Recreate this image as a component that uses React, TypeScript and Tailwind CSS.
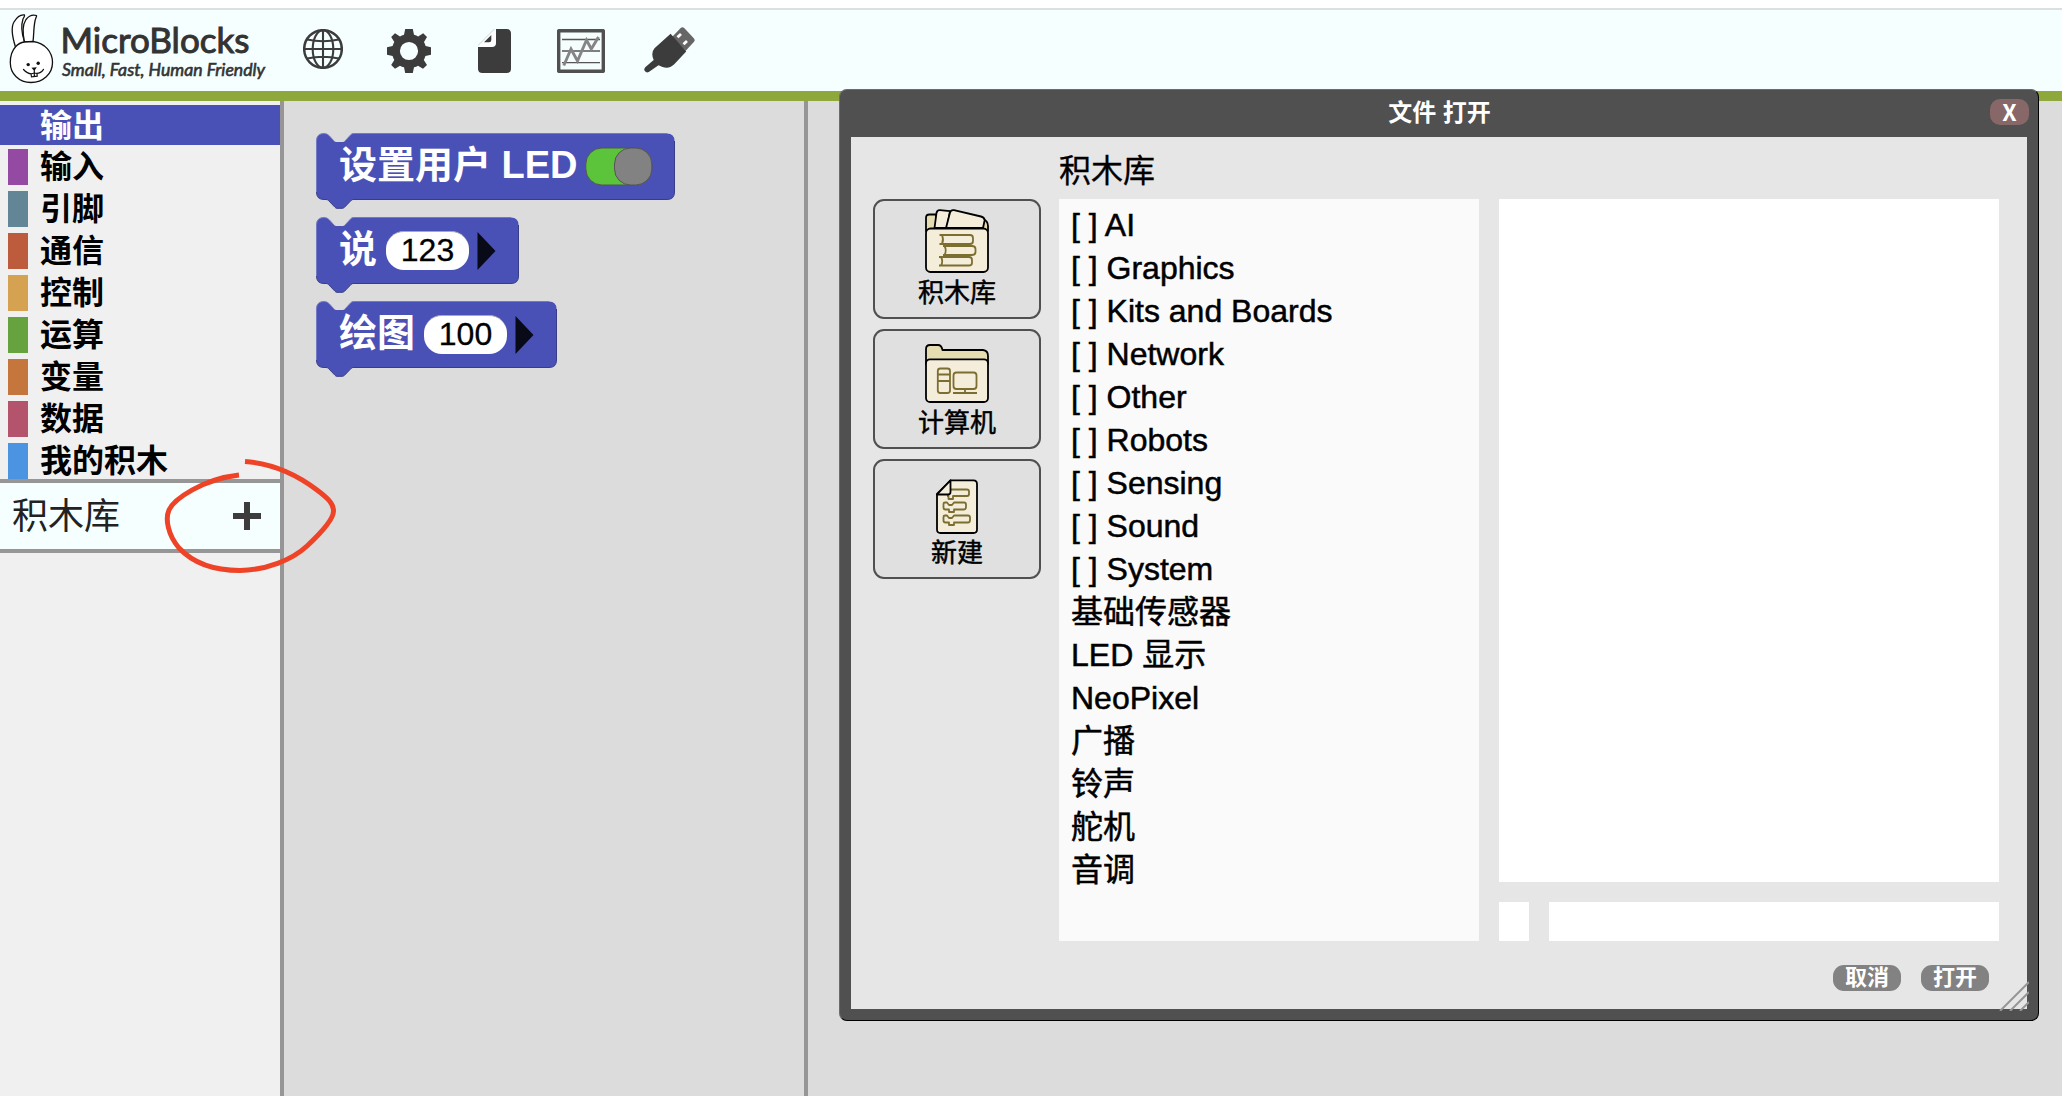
import React from "react";

const INK = "#3c3c3c";

const categories = [
  { name: "输入", swatch: "bg-[#9449a2]" },
  { name: "引脚", swatch: "bg-[#638697]" },
  { name: "通信", swatch: "bg-[#bd5b3d]" },
  { name: "控制", swatch: "bg-[#d5a252]" },
  { name: "运算", swatch: "bg-[#66a33f]" },
  { name: "变量", swatch: "bg-[#c5763c]" },
  { name: "数据", swatch: "bg-[#b4546c]" },
  { name: "我的积木", swatch: "bg-[#4a94e2]" },
];

const entries = [
  "[ ] AI",
  "[ ] Graphics",
  "[ ] Kits and Boards",
  "[ ] Network",
  "[ ] Other",
  "[ ] Robots",
  "[ ] Sensing",
  "[ ] Sound",
  "[ ] System",
  "基础传感器",
  "LED 显示",
  "NeoPixel",
  "广播",
  "铃声",
  "舵机",
  "音调",
];

function Logo() {
  return (
    <svg width="280" height="81" viewBox="0 10 280 81" className="shrink-0">
      <g fill="#fff" stroke="#111" strokeWidth="1.3" strokeLinejoin="round">
        <path d="M15.5 47 C12 36 11 27 14 22 C17 17 21 14.5 24.5 15 C25 16 24 17 23 19 C21 25 21.5 33 24.5 42 Z" />
        <path d="M24.5 42 C22.5 33 23 24 26 19.5 C29 15.5 33 14.5 36.5 15.5 C37 16.5 35.5 18 35 21 C33.5 28 34 34 33 41.5 Z" />
        <path d="M15.8 46.5 C18 44 21 42.5 24.5 42 L33 41.5 C45 43 52.5 52 52.5 62.5 C52.5 74 43 82.5 31 82.5 C19 82.5 10.3 74 10.3 62.5 C10.3 56 12.5 50 15.8 46.5 Z" />
      </g>
      <circle cx="28.2" cy="64.6" r="1.7" fill="#111" />
      <circle cx="38.2" cy="63.2" r="1.7" fill="#111" />
      <path d="M31.5 67.8 L36.8 67.3 L34.3 71 Z" fill="#111" />
      <g fill="none" stroke="#111" strokeWidth="1.2" strokeLinecap="round">
        <path d="M23.5 69.5 Q29 75.5 34.3 73 Q40 74.5 43.5 69.3" />
        <path d="M34.3 70.5 V76 M31 74 L31.5 76.8 L37.2 76.2 L37 73.5" />
      </g>
      <text
        x="60.5"
        y="52.6"
        textLength="189"
        lengthAdjust="spacingAndGlyphs"
        fill="#333"
        stroke="#333"
        strokeWidth="1"
        className="font-['Lato','Liberation_Sans',sans-serif] text-[35px] font-normal"
      >
        MicroBlocks
      </text>
      <text
        x="62"
        y="76"
        textLength="203"
        lengthAdjust="spacingAndGlyphs"
        fill="#333"
        stroke="#333"
        strokeWidth="0.6"
        className="font-['Lato','Liberation_Sans',sans-serif] text-[17.5px] font-normal italic"
      >
        Small, Fast, Human Friendly
      </text>
    </svg>
  );
}

function Globe() {
  return (
    <svg width="40" height="40" viewBox="0 0 40 40" fill="none" stroke={INK} strokeWidth="2.1">
      <circle cx="20" cy="20" r="18.8" strokeWidth="2.5" />
      <ellipse cx="20" cy="20" rx="10.3" ry="18.9" />
      <path d="M20 1 V39 M1 20 H39 M4 10.5 Q20 14 36 10.5 M4 29.5 Q20 26 36 29.5" />
    </svg>
  );
}

function Gear() {
  return (
    <svg width="44" height="44" viewBox="0 0 44 44" fill={INK}>
      <path
        fillRule="evenodd"
        d="M18.2 0 H25.8 L27 5.7 Q29.5 6.3 31.2 7.4 L36.2 4.3 L40 8 L37 13 Q38 15 38.6 17 L44 18.3 V25.8 L38.4 27 Q37.8 29.2 36.8 31 L40 36 L36 39.8 L31 36.7 Q29.3 37.8 27 38.3 L25.8 44 H18.2 L17 38.3 Q14.7 37.8 13 36.7 L8 39.8 L4.2 36 L7.3 31 Q6.2 29.2 5.6 27 L0 25.8 V18.3 L5.6 17 Q6.2 15 7.3 13 L4.2 8 L8 4.3 L13 7.4 Q14.7 6.3 17 5.7 Z M22 12.9 A9.1 9.1 0 1 0 22 31.1 A9.1 9.1 0 1 0 22 12.9 Z"
      />
    </svg>
  );
}

function FilePage() {
  return (
    <svg width="33" height="44" viewBox="0 0 33 44">
      <path d="M16.5 0 H28.5 Q33 0 33 4.5 V39.5 Q33 44 28.5 44 H4.5 Q0 44 0 39.5 V16.5 Z" fill={INK} />
      <path d="M16.5 0 H18 V14 Q18 18 14 18 H0 V16.5 Z" fill="#fff" />
      <path d="M13.3 6 V11 Q13.3 13.2 11 13.2 H6 Z" fill={INK} />
    </svg>
  );
}

function Chart() {
  return (
    <svg width="48" height="44" viewBox="0 0 48 44">
      <rect x="1.6" y="1.6" width="44.8" height="40.8" rx="1.2" fill="#f5fdfd" stroke="#505050" strokeWidth="3.6" />
      <path d="M5 10.5 H43 M5 22 H43 M5 33.7 H43" stroke="#555" strokeWidth="1.3" />
      <path d="M6.8 36.5 L14 20 L20.5 32 L29.5 11 L34.3 20 L41.5 8" fill="none" stroke="#858585" strokeWidth="2.9" />
    </svg>
  );
}

function Usb() {
  return (
    <svg width="51" height="46" viewBox="0 0 51 46">
      <path d="M28 10 L36.5 1.2 Q38.3 -0.5 40.2 1 L50 11.6 Q51.3 13.2 49.8 15 L41.5 24 Z" fill="#666" />
      <path d="M33.5 10.3 L37 7 M39.5 17.3 L43 14" stroke="#fff" strokeWidth="2.8" />
      <path
        d="M26.6 6.8 L42.2 24.6 L30.5 37 Q25.500 42.300 18.500 40 L14.500 38.300 L4.800 45 Q1.800 46.300 0.500 43.600 Q-0.300 41.600 1.500 40 L9.700 33 Q6.500 26 10.500 21.300 Z"
        fill={INK}
      />
    </svg>
  );
}

function BlockShape({ width }: { width: number }) {
  const w = width;
  const d = `M0.5 8 Q0.5 0.5 8 0.5 Q11 0.5 13 2.5 L18 8 Q19 9 20.5 9 H26.5 Q28 9 29 8 L35 1.5 Q36 0.5 37.5 0.5 H${w - 8} Q${w - 0.5} 0.5 ${w - 0.5} 8 V59 Q${w - 0.5} 66.5 ${w - 8} 66.5 H37 Q36 66.5 35 67.5 L28.5 74.3 Q27.5 75.3 26 75.3 H21 Q19.8 75.3 19 74.3 L12.5 67.5 Q11.5 66.5 10 66.5 H8 Q0.5 66.5 0.5 59 Z`;
  return (
    <svg width={w} height="76" viewBox={`0 0 ${w} 76`} className="absolute left-0 top-0">
      <path d={d} fill="#4a51b6" />
      <path d={`M0.5 59 V8 Q0.5 0.5 8 0.5 Q11 0.5 13 2.5 L18 8 M29 8 L35 1.5 Q36 0.5 37.5 0.5 H${w - 8}`} fill="none" stroke="#7479c6" strokeWidth="1" />
      <path
        d={`M${w - 0.5} 8 V59 Q${w - 0.5} 66.5 ${w - 8} 66.5 H37 Q36 66.5 35 67.5 L28.5 74.3 Q27.5 75.3 26 75.3 H21 Q19.8 75.3 19 74.3 L12.5 67.5 Q11.5 66.5 10 66.5 H8 Q0.5 66.5 0.5 59`}
        fill="none"
        stroke="#383d89"
        strokeWidth="1"
      />
    </svg>
  );
}

function ScriptBlock({ width, label, children }: { width: number; label: string; children: React.ReactNode }) {
  return (
    <div className="relative h-[84px]" style={{ width }}>
      <BlockShape width={width} />
      <div className="relative flex h-[67px] items-center pl-[23px]">
        <span className="mr-[9px] whitespace-pre pb-[4px] text-[38px] font-bold leading-[40px] text-white">{label}</span>
        {children}
      </div>
    </div>
  );
}

function NumberSlot({ value }: { value: string }) {
  return (
    <>
      <span className="flex h-[39px] w-[83px] items-center justify-center rounded-[18px] border-t border-[#aaa] bg-white pb-[3px] text-[32px] leading-none text-black [-webkit-text-stroke:0.3px_#000]">
        {value}
      </span>
      <svg width="19" height="38" viewBox="0 0 19 38" className="ml-2">
        <path d="M0.5 0 L18.5 19 L0.5 38 Z" fill="#080a18" />
      </svg>
    </>
  );
}

function LibraryFolder() {
  return (
    <svg width="64" height="64" viewBox="0 0 64 64" stroke="#000" strokeWidth="1.8" strokeLinejoin="round">
      <path d="M1 22 V9 Q1 5.5 4.5 5.5 H11 L12 20 Z M58 10 Q63 12 63 17 V22 H57 Z" fill="#e6dcb2" />
      <path d="M9.500 19 L11.500 4 Q12 1 15 1.200 L25 2.200 L22 19 Z" fill="#f3edda" />
      <path d="M21 19 L25 3.500 Q26 0.500 29 1.200 L56 7.500 Q60 8.500 59.500 12 L58 19 Z" fill="#f3edda" />
      <rect x="1" y="19.5" width="62" height="43.5" rx="4.5" fill="#f3edda" />
      <g fill="none" stroke="#7c6e31" strokeWidth="1.8">
        <path d="M14.5 26 H45 Q48 26 48 29 V32 Q48 35 45 35 H14.5 M17 26 Q19 30.5 17 35" />
        <path d="M18 37 H47 Q50.5 37 50.5 40 V43 Q50.5 46 47 46 H18 M19.5 37 Q22 41.5 19.5 46" />
        <path d="M14 48 H44 Q47 48 47 51 V54 Q47 56.5 44 56.5 H14 M16 48 Q18.5 52.3 16 56.5" />
      </g>
    </svg>
  );
}

function ComputerFolder() {
  return (
    <svg width="64" height="59" viewBox="0 0 64 59" stroke="#000" strokeWidth="1.8" strokeLinejoin="round">
      <path d="M1 20 V5 Q1 1 5 1 H13 Q16.500 1 17.500 6 H58 Q63 6.500 63 12 V20 Z" fill="#e6dcb2" />
      <rect x="1" y="15.3" width="62" height="42.7" rx="4" fill="#f3edda" />
      <g fill="none" stroke="#7c6e31" strokeWidth="1.8">
        <rect x="12.8" y="24.5" width="12.2" height="24.5" rx="2.5" />
        <path d="M13 30.5 H25 M13 37 H25" />
        <rect x="28.5" y="28.5" width="23" height="16.5" rx="3" />
        <path d="M40 45 V48.5 M28 49 H52" />
      </g>
    </svg>
  );
}

function NewFile() {
  return (
    <svg width="42" height="55" viewBox="0 0 42 55" stroke="#000" strokeWidth="1.8" strokeLinejoin="round" className="-mb-px">
      <path d="M14.5 1.3 H37.5 Q41 1.3 41 5 V50.5 Q41 54 37.5 54 H4.5 Q1 54 1 50.5 V15 Z" fill="#f3edda" />
      <g fill="none" stroke="#7c6e31" strokeWidth="1.8">
        <path d="M11 17 H12.5 V20 H17 V17 H31 Q33 17 33 15 V12.5 Q33 10.5 31 10.5 H15" />
        <path d="M9 23.5 H11 L13 26 H16 L18 23.5 H28 Q30 23.5 30 25.5 V28 Q30 30.5 28 30.5 H18 V33 H13 V30.5 H9.5 Q7.5 30.5 7.5 28.5 V25 Q7.5 23.5 9 23.5 Z" />
        <path d="M9 36.5 H11 L13 39 H16 L18 36.5 H32 Q34 36.5 34 38.5 V41 Q34 43.5 32 43.5 H18 V46 H13 V43.5 H9.5 Q7.5 43.5 7.5 41.5 V38 Q7.5 36.5 9 36.5 Z" />
      </g>
      <path d="M14.5 1.3 V13 Q14.5 15.5 12 15.5 H1 Z" fill="#f3edda" />
    </svg>
  );
}

function PlaceButton({ label, children }: { label: string; children: React.ReactNode }) {
  return (
    <button className="flex h-[120px] w-[168px] flex-col items-center justify-end rounded-[11px] border-2 border-[#505050] bg-[#e0e0e0] pb-[8px]">
      {children}
      <span className="mt-[4px] text-[26px] leading-[32px] [-webkit-text-stroke:0.5px_#000]">{label}</span>
    </button>
  );
}

function FileDialog() {
  return (
    <div className="absolute left-[839px] top-[89px] flex h-[932px] w-[1200px] flex-col rounded-[8px] border border-b-black border-l-[#6b6b6b] border-r-black border-t-[#6b6b6b] bg-[#505050] px-[11px] pb-[11px]">
      <div className="relative flex h-[47px] items-center justify-center text-2xl font-bold text-white">
        <span className="-mt-[2px] pl-px">文件 打开</span>
        <button className="absolute right-[-2px] top-[9px] flex h-[26px] w-[39px] items-center justify-center rounded-[10px] bg-[#876767] pb-px font-['Noto_Sans_CJK_SC',sans-serif] text-[23px] leading-none">
          X
        </button>
      </div>
      <div className="relative flex flex-1 flex-col bg-[#e6e6e6] pl-[22px] pr-[28px]">
        <h2 className="h-[62px] pl-[186px] pt-[11px] text-[32px] leading-[46px] [-webkit-text-stroke:0.3px_#000]">积木库</h2>
        <div className="flex h-[742px]">
          <div className="flex w-[186px] flex-col gap-[10px]">
            <PlaceButton label="积木库">
              <LibraryFolder />
            </PlaceButton>
            <PlaceButton label="计算机">
              <ComputerFolder />
            </PlaceButton>
            <PlaceButton label="新建">
              <NewFile />
            </PlaceButton>
          </div>
          <ul className="w-[420px] bg-[#fafafa] pl-[12px] pt-[5px] text-[32px] leading-[43px] [-webkit-text-stroke:0.5px_#000]">
            {entries.map((entry) => (
              <li key={entry} className="h-[43px] whitespace-nowrap">
                {entry}
              </li>
            ))}
          </ul>
          <div className="ml-5 flex flex-1 flex-col gap-5">
            <div className="h-[683px] bg-white" />
            <div className="flex flex-1 gap-5">
              <div className="w-[30px] bg-white" />
              <div className="flex-1 bg-white" />
            </div>
          </div>
        </div>
        <div className="mt-6 flex justify-end gap-5 pr-[10px] text-[22px] font-bold text-white">
          <button className="flex h-[26px] w-[68px] items-center justify-center rounded-[11px] bg-[#828282] leading-none">取消</button>
          <button className="flex h-[26px] w-[68px] items-center justify-center rounded-[11px] bg-[#828282] leading-none">打开</button>
        </div>
        <svg width="30" height="30" viewBox="0 0 30 30" className="absolute -bottom-[2px] -right-[2px]" stroke="#969696" strokeWidth="2">
          <path d="M1 30 L30 1 M11 30 L30 11 M21 30 L30 21" />
        </svg>
      </div>
    </div>
  );
}

export default function App() {
  return (
    <div className="relative flex h-[1096px] w-[2062px] flex-col overflow-hidden bg-white font-['Liberation_Sans','Noto_Sans_CJK_SC',sans-serif] text-black">
      <header className="mt-2 flex h-[93px] items-start border-b-[10px] border-t-2 border-b-[#8fa83c] border-t-[#dcdfe1] bg-[#f5ffff]">
        <Logo />
        <div className="flex pl-[23px] pt-[17px]">
          <div className="mt-[2px] w-[84px]"><Globe /></div>
          <div className="mt-[2px] w-[91px]"><Gear /></div>
          <div className="mt-[2px] w-[79px]"><FilePage /></div>
          <div className="mt-[2px] w-[87px]"><Chart /></div>
          <Usb />
        </div>
      </header>

      <div className="flex flex-1">
        <aside className="w-[284px] border-r-4 border-[#969696] bg-[#f0f0f0] pt-1">
          <div className="flex h-10 items-center bg-[#4a51b6] pl-10 pt-px text-[32px] font-bold leading-none text-white">输出</div>
          <div className="flex flex-col pt-1">
            {categories.map((c) => (
              <div key={c.name} className="flex h-[42px] items-start pl-2 last:h-[36px]">
                <span className={`h-9 w-5 ${c.swatch}`} />
                <span className="ml-3 text-[32px] font-bold leading-[37px]">{c.name}</span>
              </div>
            ))}
          </div>
          <div className="flex h-[74px] items-center justify-between border-y-4 border-[#969696] bg-[#f5ffff] pl-3 pr-[19px]">
            <span className="pt-px text-[36px] leading-none text-[#222]">积木库</span>
            <svg width="28" height="28" viewBox="0 0 28 28" fill={INK}>
              <path d="M11 0 H17 V11 H28 V17 H17 V28 H11 V17 H0 V11 H11 Z" />
            </svg>
          </div>
        </aside>
        <section className="w-[524px] border-r-4 border-[#969696] bg-[#dcdcdc] pl-8 pt-8">
          <ScriptBlock width={359} label="设置用户 LED">
            <svg width="68" height="39" viewBox="0 0 68 39" stroke="#555" strokeWidth="1" className="-ml-[2px]">
              <rect x="0.8" y="1" width="66" height="37" rx="16" fill="#5bc43b" />
              <rect x="29.5" y="1" width="37.3" height="37" rx="16" fill="#828282" />
            </svg>
          </ScriptBlock>
          <ScriptBlock width={203} label="说">
            <NumberSlot value="123" />
          </ScriptBlock>
          <ScriptBlock width={241} label="绘图">
            <NumberSlot value="100" />
          </ScriptBlock>
        </section>
        <main className="flex-1 bg-[#dcdcdc]" />
      </div>

      <svg width="180" height="120" viewBox="160 455 180 120" className="absolute left-[160px] top-[455px]" fill="none" stroke="#ee4326" strokeWidth="5">
        <path d="M245 461.500 C266 463 292 471 317 490 C329 499 333.500 504 333.500 511 C333.500 519 322 532 307 546 C292 560 266 570 240 570.500 C213 570.500 193 563 179 548 C168 535 165 519 169 510 C174 499 203 479 239 475" />
      </svg>

      <FileDialog />
    </div>
  );
}
